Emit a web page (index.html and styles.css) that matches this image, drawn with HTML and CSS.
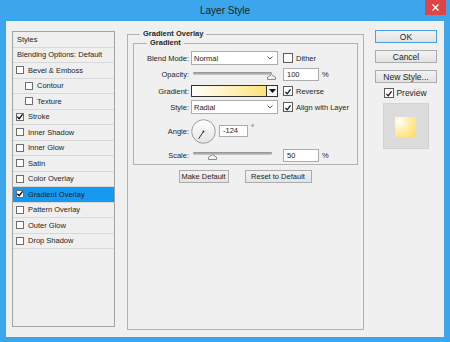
FILE: index.html
```html
<!DOCTYPE html>
<html>
<head>
<meta charset="utf-8">
<title>Layer Style</title>
<link rel="stylesheet" href="styles.css">
</head>
<body>
<div class="win">
  <div class="titlebar">
    <span class="title">Layer Style</span>
    <span class="close"><svg width="7" height="7" viewBox="0 0 7 7"><path d="M0.5 0.5 L6.5 6.5 M6.5 0.5 L0.5 6.5" stroke="#fff" stroke-width="1.3"/></svg></span>
  </div>
  <div class="content">
    <div class="styles">
      <div class="srow head">Styles</div>
      <div class="srow head">Blending Options: Default</div>
      <div class="srow"><span class="cb"></span>Bevel &amp; Emboss</div>
      <div class="srow sub"><span class="cb"></span>Contour</div>
      <div class="srow sub"><span class="cb"></span>Texture</div>
      <div class="srow"><span class="cb"><svg width="8" height="8" viewBox="0 0 8 8"><path d="M1.3 3.8 L3.2 5.8 L6.6 1.4" stroke="#111" stroke-width="1.4" fill="none"/></svg></span>Stroke</div>
      <div class="srow"><span class="cb"></span>Inner Shadow</div>
      <div class="srow"><span class="cb"></span>Inner Glow</div>
      <div class="srow"><span class="cb"></span>Satin</div>
      <div class="srow"><span class="cb"></span>Color Overlay</div>
      <div class="srow sel"><span class="cb"><svg width="8" height="8" viewBox="0 0 8 8"><path d="M1.3 3.8 L3.2 5.8 L6.6 1.4" stroke="#111" stroke-width="1.4" fill="none"/></svg></span>Gradient Overlay</div>
      <div class="srow"><span class="cb"></span>Pattern Overlay</div>
      <div class="srow"><span class="cb"></span>Outer Glow</div>
      <div class="srow"><span class="cb"></span>Drop Shadow</div>
    </div>

    <fieldset class="outer">
      <legend>Gradient Overlay</legend>
      <fieldset class="inner">
        <legend>Gradient</legend>
        <div class="frow r1">
          <span class="lbl">Blend Mode:</span>
          <div class="ctl select"><span>Normal</span><svg width="6" height="4" viewBox="0 0 6 4"><path d="M0.5 0.5 L3 3 L5.5 0.5" stroke="#555" fill="none"/></svg></div>
          <div class="extra"><span class="cb2"></span>Dither</div>
        </div>
        <div class="frow r2">
          <span class="lbl">Opacity:</span>
          <div class="ctl"><div class="slider"><div class="track"></div><svg class="thumb" style="left:74px" width="9" height="6" viewBox="0 0 9 6"><path d="M0.5 5.5 L0.5 3.2 L4.5 0.6 L8.5 3.2 L8.5 5.5 Z" fill="#f2f2f2" stroke="#8a8a8a"/></svg></div></div>
          <div class="extra"><span class="num">100</span><span class="pct">%</span></div>
        </div>
        <div class="frow r3">
          <span class="lbl">Gradient:</span>
          <div class="ctl grad"><div class="grad-fill"></div><div class="grad-btn"><svg width="7" height="4" viewBox="0 0 7 4"><path d="M0 0 L7 0 L3.5 4 Z" fill="#111"/></svg></div></div>
          <div class="extra"><span class="cb2"><svg width="10" height="10" viewBox="0 0 10 10"><path d="M1.8 4.8 L4 7.3 L8.2 1.8" stroke="#111" stroke-width="1.6" fill="none"/></svg></span>Reverse</div>
        </div>
        <div class="frow r4">
          <span class="lbl">Style:</span>
          <div class="ctl select"><span>Radial</span><svg width="6" height="4" viewBox="0 0 6 4"><path d="M0.5 0.5 L3 3 L5.5 0.5" stroke="#555" fill="none"/></svg></div>
          <div class="extra"><span class="cb2"><svg width="10" height="10" viewBox="0 0 10 10"><path d="M1.8 4.8 L4 7.3 L8.2 1.8" stroke="#111" stroke-width="1.6" fill="none"/></svg></span>Align with Layer</div>
        </div>
        <div class="frow r5">
          <span class="lbl">Angle:</span>
          <div class="ctl angle">
            <svg class="dial" width="25" height="25" viewBox="0 0 25 25">
              <defs><linearGradient id="dg" x1="0" y1="0" x2="0" y2="1"><stop offset="0" stop-color="#ffffff"/><stop offset="1" stop-color="#e4e4e4"/></linearGradient></defs>
              <circle cx="12.5" cy="12.5" r="11.8" fill="url(#dg)" stroke="#9c9c9c"/>
              <path d="M12.5 12.5 L7.6 19.8" stroke="#333" stroke-width="1"/>
              <circle cx="12.5" cy="12.5" r="1" fill="#333"/>
            </svg>
            <span class="num small">-124</span><span class="deg">°</span>
          </div>
        </div>
        <div class="frow r6">
          <span class="lbl">Scale:</span>
          <div class="ctl"><div class="slider"><div class="track"></div><svg class="thumb" style="left:15px" width="9" height="6" viewBox="0 0 9 6"><path d="M0.5 5.5 L0.5 3.2 L4.5 0.6 L8.5 3.2 L8.5 5.5 Z" fill="#f2f2f2" stroke="#8a8a8a"/></svg></div></div>
          <div class="extra"><span class="num">50</span><span class="pct">%</span></div>
        </div>
      </fieldset>
      <div class="defaults">
        <button class="sbtn w50">Make Default</button>
        <button class="sbtn w67">Reset to Default</button>
      </div>
    </fieldset>

    <div class="side">
      <button class="btn def">OK</button>
      <button class="btn">Cancel</button>
      <button class="btn">New Style...</button>
      <div class="pv-row"><span class="cb2"><svg width="10" height="10" viewBox="0 0 10 10"><path d="M1.8 4.8 L4 7.3 L8.2 1.8" stroke="#111" stroke-width="1.6" fill="none"/></svg></span>Preview</div>
      <div class="pv-box"><div class="pv-swatch"></div></div>
    </div>
  </div>
</div>
</body>
</html>
```

FILE: styles.css
```css
* { box-sizing: border-box; margin: 0; padding: 0; }
html, body { width: 450px; height: 342px; overflow: hidden; }
body {
  background: #3ba6eb;
  font-family: "Liberation Sans", Arial, sans-serif;
  font-size: 7.5px;
  color: #1e1e1e;
}
.win { width: 450px; height: 342px; }

.titlebar {
  height: 21px;
  display: grid;
  grid-template-columns: 1fr auto 1fr;
  padding: 0 4px;
  align-items: start;
}
.title {
  grid-column: 2;
  font-size: 10px;
  line-height: 21px;
  color: #1c1c1c;
}
.close {
  grid-column: 3;
  justify-self: end;
  width: 21px;
  height: 15px;
  background: #e04545;
  display: flex;
  align-items: center;
  justify-content: center;
}

.content {
  margin: 0 6px;
  height: 316px;
  background: #f0f0f0;
  display: flex;
  align-items: flex-start;
  padding-left: 6px;
}

/* styles list */
.styles {
  width: 103px;
  height: 296px;
  margin-top: 10px;
  border: 1px solid #a3a3a3;
  background: #efefef;
  flex: none;
}
.srow {
  height: 15.5px;
  border-bottom: 1px solid #d8d8d8;
  display: flex;
  align-items: center;
  gap: 4px;
  padding-left: 3px;
  white-space: nowrap;
}
.srow.head { padding-left: 4px; }
.srow.sub { padding-left: 12px; }
.srow.sel { background: #1699f1; }
.cb {
  width: 8px;
  height: 8px;
  border: 1px solid #6e6e6e;
  background: #fff;
  flex: none;
  display: flex;
  align-items: center;
  justify-content: center;
}
.cb svg { flex: none; }

/* fieldsets */
fieldset {
  border: 1px solid #b2b2b2;
  min-width: 0;
}
.outer {
  width: 237px;
  height: 300px;
  margin: 9px 0 0 12px;
  padding: 0 5px;
  flex: none;
}
.outer > legend {
  font-weight: bold;
  line-height: 8px;
  margin-left: 7px;
  padding: 0 3px;
}
.inner {
  width: 225px;
  padding: 0 0 2px 0;
}
.inner > legend {
  font-weight: bold;
  line-height: 10px;
  margin-left: 13px;
  padding: 0 3px;
}

.frow { display: flex; align-items: center; }
.r1 { margin-top: 3px; height: 14px; }
.r2 { margin-top: 3px; height: 13px; }
.r3 { margin-top: 4px; height: 12px; }
.r4 { margin-top: 3px; height: 14px; }
.r5 { margin-top: 5px; height: 24px; }
.r6 { margin-top: 5px; height: 14px; }

.lbl {
  width: 55px;
  text-align: right;
  margin-right: 2px;
  flex: none;
  white-space: nowrap;
}
.ctl { width: 87px; flex: none; height: 100%; }
.extra {
  margin-left: 5px;
  display: flex;
  align-items: center;
  gap: 3px;
  white-space: nowrap;
}

.select {
  background: #fff;
  border: 1px solid #acacac;
  display: flex;
  align-items: center;
  justify-content: space-between;
  padding: 0 4px 0 2px;
}

.cb2 {
  width: 10px;
  height: 10px;
  border: 1px solid #5c5c5c;
  background: #fff;
  flex: none;
  display: flex;
}

.num {
  width: 36px;
  height: 13px;
  background: #fff;
  border: 1px solid #abadb3;
  padding-left: 3px;
  line-height: 11px;
  flex: none;
}
.num.small { width: 29px; height: 12px; line-height: 10px; }
.pct { margin-left: 0; }
.deg { align-self: flex-start; margin: 4px 0 0 3px; font-size: 8px; }

.slider {
  position: relative;
  height: 100%;
  margin: 0 6px 0 2px;
  padding-top: 4px;
}
.track {
  height: 3px;
  background: linear-gradient(#8c8c8c, #cfcfcf);
  border-radius: 1px;
}
.thumb { position: absolute; top: 6px; }

.grad {
  display: flex;
  border: 1px solid #333;
}
.grad-fill { flex: 1; background: linear-gradient(90deg, #fffefa 0%, #fff3c4 45%, #fde17a 100%); }
.grad-btn {
  width: 11px;
  border-left: 1px solid #333;
  background: #f6f6f6;
  display: flex;
  align-items: center;
  justify-content: center;
}

.angle { display: flex; align-items: center; }
.dial { flex: none; margin-right: 3px; }

.defaults {
  display: flex;
  justify-content: center;
  gap: 16px;
  margin-top: 5px;
  padding-right: 1px;
}
.sbtn, .btn {
  font-family: inherit;
  color: #1e1e1e;
  border: 1px solid #acacac;
  background: linear-gradient(#f3f3f3, #e2e2e2);
  display: flex;
  align-items: center;
  justify-content: center;
  white-space: nowrap;
}
.sbtn { height: 13px; font-size: 7.5px; }
.w50 { width: 50px; }
.w67 { width: 67px; }

.side {
  width: 62px;
  margin: 9px 0 0 11px;
  flex: none;
  display: flex;
  flex-direction: column;
}
.btn {
  height: 13px;
  width: 62px;
  font-size: 8.5px;
  margin-bottom: 7px;
}
.btn.def { border-color: #49a0e4; }
.pv-row {
  display: flex;
  justify-content: center;
  align-items: center;
  gap: 2px;
  height: 10px;
  margin-top: -2px;
  font-size: 8.5px;
  padding-right: 1px;
}
.pv-box {
  width: 46px;
  height: 46px;
  margin: 5px auto 0;
  background: #dcdcdc;
  border: 1px solid #d2d2d2;
  padding: 13px 0 0 11px;
}
.pv-swatch {
  width: 21px;
  height: 20px;
  background: radial-gradient(circle at 22% 22%, #ffffff 0%, #fff1b4 35%, #fde47e 75%, #fbdc6c 100%);
}
```
